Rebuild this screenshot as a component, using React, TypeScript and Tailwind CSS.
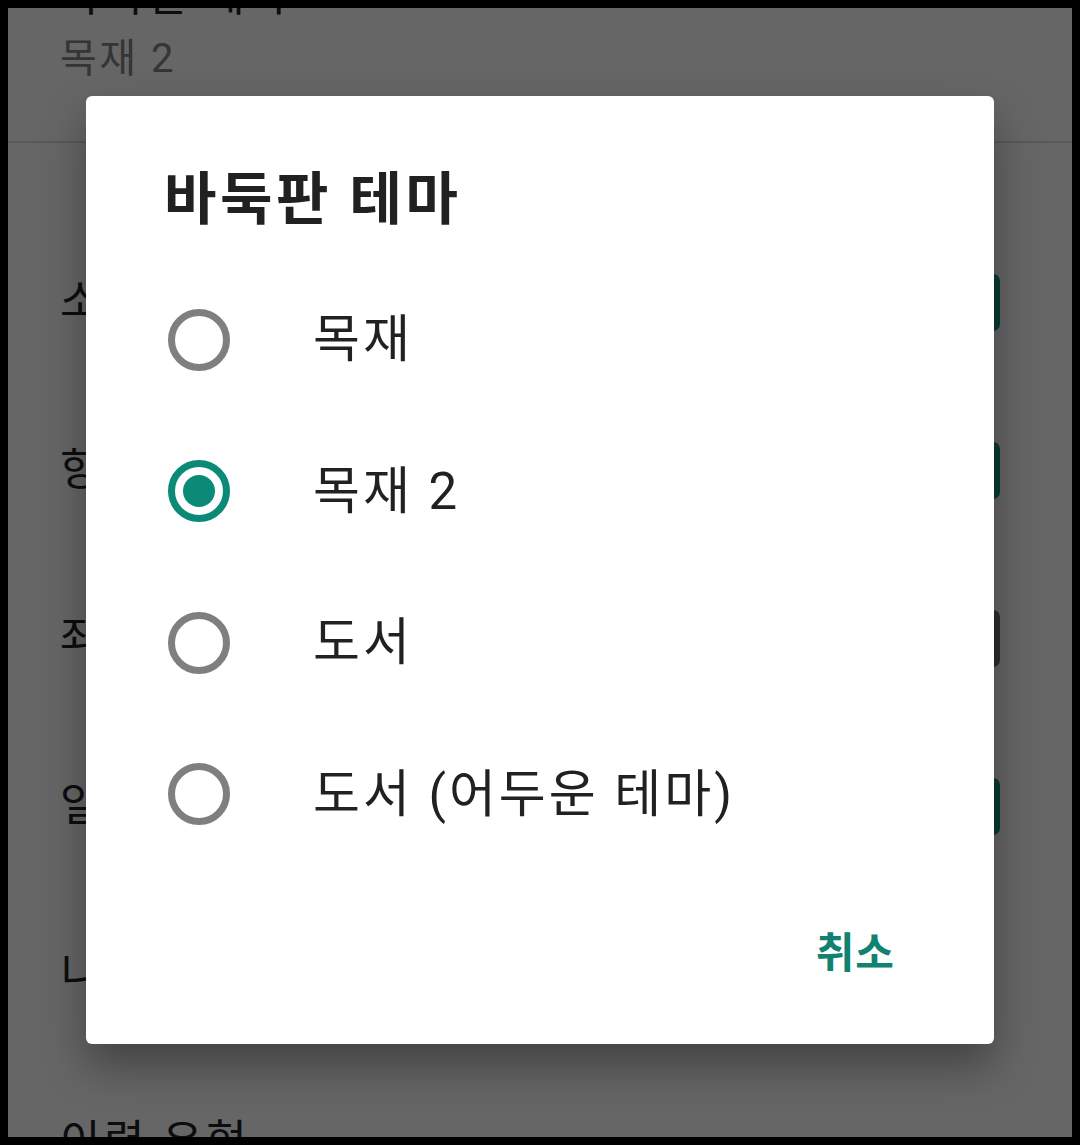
import React from "react";

const FONT = { fontFamily: 'Roboto, "Noto Sans CJK KR", sans-serif' };

type Row = { label: string; checkbox?: "on" | "off" };

const ROWS: Row[] = [
  { label: "소리 효과", checkbox: "on" },
  { label: "항상 화면 켜기", checkbox: "on" },
  { label: "좌표 표시", checkbox: "off" },
  { label: "일시정지 확인", checkbox: "on" },
  { label: "니기리 방식" },
  { label: "이력 유형" },
];

const OPTIONS = ["목재", "목재 2", "도서", "도서 (어두운 테마)"];

function Checkbox({ state }: { state: "on" | "off" }) {
  if (state === "on") {
    return (
      <div className="flex h-[57px] w-[57px] shrink-0 items-center justify-center rounded-[7px] bg-[#1b9583]">
        <svg viewBox="0 0 24 24" className="h-[44px] w-[44px]" fill="none" stroke="white" strokeWidth="3">
          <path d="M5 12.5l4.5 4.5L19 7.5" />
        </svg>
      </div>
    );
  }
  return <div className="h-[57px] w-[57px] shrink-0 rounded-[7px] border-[7px] border-[#727272]" />;
}

function Radio({ checked }: { checked: boolean }) {
  return (
    <div
      className={[
        "flex h-[62px] w-[62px] shrink-0 items-center justify-center rounded-full border-[7px]",
        checked ? "border-[#0c8a78]" : "border-[#7f7f7f]",
      ].join(" ")}
    >
      {checked ? <div className="h-[32px] w-[32px] rounded-full bg-[#0c8a78]" /> : null}
    </div>
  );
}

export default function App() {
  const selected = 1;
  return (
    <div className="h-[1145px] w-[1080px] bg-black p-[8px]" style={FONT}>
      <div className="relative h-full w-full overflow-hidden bg-white">
        {/* settings page behind the dialog */}
        <div className="flex flex-col">
          <div className="-mt-[34px] pl-[52px] text-[44px] leading-none tracking-[3px] text-[#212121]">바둑판 테마</div>
          <div className="mt-[21px] pl-[52px] text-[40px] leading-none tracking-[2.5px] text-[#858585]">목재 2</div>
          <div className="mt-[62px] h-[2px] bg-[#dcdcdc]" />
          <div className="flex flex-col pt-[75px]">
            {ROWS.map((row) => (
              <div key={row.label} className="flex h-[168px] shrink-0 items-center justify-between pl-[52px] pr-[72px]">
                <span className="text-[44px] leading-none tracking-[3.5px] text-[#212121]">{row.label}</span>
                {row.checkbox ? <Checkbox state={row.checkbox} /> : null}
              </div>
            ))}
          </div>
        </div>

        {/* scrim + dialog */}
        <div className="absolute inset-0 flex items-center justify-center bg-black/60 pb-[5px]">
          <div className="flex h-[948px] w-[908px] flex-col rounded-[6px] bg-white shadow-[0_22px_44px_rgba(0,0,0,0.35)]">
            <h2 className="pl-[78px] pt-[75px] text-[57px] font-bold leading-none tracking-[3.5px] text-[#212121]">
              바둑판 테마
            </h2>
            <div className="mt-[36px] flex flex-col">
              {OPTIONS.map((opt, i) => (
                <div key={opt} className="flex h-[151.5px] items-center pl-[82px]">
                  <Radio checked={i === selected} />
                  <span className="ml-[83px] text-[51px] leading-none tracking-[3px] text-[#212121]">{opt}</span>
                </div>
              ))}
            </div>
            <div className="mt-auto flex justify-end pb-[69px] pr-[99px]">
              <button type="button" className="text-[42px] font-bold leading-none tracking-[1px] text-[#0f8271]">
                취소
              </button>
            </div>
          </div>
        </div>
      </div>
    </div>
  );
}
